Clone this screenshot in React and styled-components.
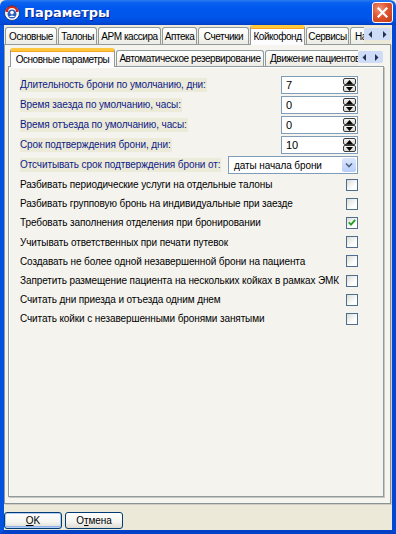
import React from "react";
import styled, { createGlobalStyle, css } from "styled-components";

const GlobalStyle = createGlobalStyle`
  html, body {
    margin: 0;
    padding: 0;
    background: #ECE9D8;
  }
  * {
    box-sizing: border-box;
  }
`;

const UI_FONT = `"Liberation Sans", Arial, sans-serif`;

const Window = styled.div`
  width: 396px;
  height: 534px;
  display: flex;
  flex-direction: column;
  font-family: ${UI_FONT};
  font-size: 10px;
  letter-spacing: -0.1px;
  color: #000;
`;

const TitleBar = styled.div`
  height: 25px;
  flex: none;
  display: flex;
  align-items: center;
  padding: 0 3px 0 4px;
  border-radius: 6px 6px 0 0;
  background: linear-gradient(
    to bottom,
    #2a7cf0 0%,
    #0b62ef 10%,
    #0058ee 30%,
    #0055e9 70%,
    #0049d8 92%,
    #003dc0 100%
  );
`;

const TitleText = styled.span`
  flex: 1;
  margin-left: 4px;
  font-family: "DejaVu Sans", sans-serif;
  font-weight: bold;
  font-size: 13px;
  letter-spacing: 0;
  color: #fff;
  text-shadow: 1px 1px 0 #0a1e8c;
`;

const CloseButton = styled.div`
  width: 21px;
  height: 21px;
  border: 1px solid #fff;
  border-radius: 3px;
  background: radial-gradient(circle at 35% 30%, #f0947a 0%, #e0532f 45%, #c23a15 100%);
  display: flex;
  align-items: center;
  justify-content: center;
`;

const Frame = styled.div`
  flex: 1;
  display: flex;
  flex-direction: column;
  border: 4px solid #0055e5;
  border-top: none;
  border-left-color: #0452e0;
  border-right-color: #0348d4;
  border-bottom-color: #0041c8;
  background: #ECE9D8;
  min-height: 0;
`;

const TabStrip = styled.div`
  position: relative;
  z-index: 1;
  flex: none;
  display: flex;
  align-items: flex-start;
  height: ${(p) => p.$h}px;
`;

const TabList = styled.div`
  flex: 1;
  min-width: 0;
  height: ${(p) => p.$h + 1}px;
  display: flex;
  align-items: flex-end;
  gap: 1px;
  padding-left: ${(p) => p.$pad}px;
  overflow: hidden;
`;

const Tab = styled.div`
  flex: none;
  width: ${(p) => p.$w}px;
  height: ${(p) => (p.$active ? p.$h + 1 : p.$h - 2)}px;
  margin-bottom: ${(p) => (p.$active ? 0 : 1)}px;
  padding: 0 1px;
  display: flex;
  align-items: center;
  justify-content: ${(p) => (p.$clip ? "flex-start" : "center")};
  padding-left: ${(p) => (p.$clip ? 4 : 1)}px;
  white-space: nowrap;
  overflow: hidden;
  letter-spacing: -0.45px;
  border: 1px solid #919b9c;
  border-bottom: none;
  border-radius: 3px 3px 0 0;
  background: linear-gradient(to bottom, #fff 0%, #f7f7f4 50%, #ecebe5 100%);
  ${(p) =>
    p.$active &&
    css`
      background: #fcfcfe;
      border-top: 3px solid #ffc83c;
      box-shadow: inset 0 1px 0 #f6a623;
    `}
`;

const ScrollArrows = styled.div`
  flex: none;
  width: ${(p) => p.$w}px;
  height: 12px;
  margin: ${(p) => p.$top}px 1px 0 0;
  display: flex;
  align-items: center;
  justify-content: space-around;
  background: #cfdcf8;
  border-radius: 2px;
`;

const Panel = styled.div`
  flex: 1;
  display: flex;
  flex-direction: column;
  margin-right: 1px;
  padding: 3px 6px 6px 3px;
  border: 1px solid #919b9c;
  border-right-color: #8a9394;
  border-bottom-color: #8a9394;
  box-shadow: 1px 1px 0 #d0cfc7;
  background: #f5f4ef;
  min-height: 0;
`;

const InnerPanel = styled.div`
  flex: 1;
  padding: 8px 25px 0 11px;
  border: 1px solid #919b9c;
  box-shadow: 1px 1px 0 #c8c7bf, inset 1px 1px 0 #fff;
  background: #f4f3ee;
`;

const FieldRow = styled.div`
  height: 20px;
  display: flex;
  align-items: center;
  justify-content: space-between;
`;

const FieldLabel = styled.span`
  line-height: 14px;
  white-space: nowrap;
  padding: 0 1px 0 0;
  background: #ecead9;
  color: #0c1a88;
`;

const SpinBox = styled.div`
  width: 77px;
  height: 18px;
  display: flex;
  align-items: center;
  border: 1px solid #7f9db9;
  background: #fff;
  padding: 0 1px 0 4px;
`;

const SpinValue = styled.span`
  flex: 1;
  font-size: 11px;
`;

const SpinButtons = styled.div`
  width: 13px;
  height: 14px;
  display: flex;
  flex-direction: column;
`;

const SpinButton = styled.div`
  flex: 1;
  display: flex;
  align-items: center;
  justify-content: center;
  border: 1px solid #3c3c3c;
  border-radius: 2px;
  background: linear-gradient(to bottom, #f4f4f2, #d8d8d0);
`;

const Combo = styled.div`
  width: 130px;
  height: 18px;
  display: flex;
  align-items: center;
  border: 1px solid #7f9db9;
  background: #fff;
  padding: 0 1px 0 5px;
`;

const ComboText = styled.span`
  flex: 1;
  white-space: nowrap;
`;

const ComboButton = styled.div`
  width: 14px;
  height: 14px;
  display: flex;
  align-items: center;
  justify-content: center;
  border-radius: 2px;
  background: linear-gradient(to bottom, #dde7fd, #b9cdf8);
`;

const CheckRow = styled.div`
  height: 19.2px;
  display: flex;
  align-items: center;
  justify-content: space-between;
  white-space: nowrap;
`;

const CheckBox = styled.div`
  width: 12px;
  height: 12px;
  flex: none;
  border: 1px solid #4f6d8f;
  background: linear-gradient(135deg, #dcdcd6 0%, #fff 70%);
  display: flex;
  align-items: center;
  justify-content: center;
`;

const ButtonBar = styled.div`
  height: 26px;
  flex: none;
  display: flex;
  gap: 3px;
  padding-top: 8px;
`;

const Button = styled.div`
  width: 58px;
  height: 17px;
  display: flex;
  align-items: center;
  justify-content: center;
  border: 1px solid #003c74;
  border-radius: 3px;
  background: linear-gradient(to bottom, #fff 0%, #f4f4f0 60%, #dcdad2 100%);
  ${(p) =>
    p.$default &&
    css`
      box-shadow: inset 0 0 0 1px #b2cbf5, inset 0 -1px 0 1px #8fb1ea;
    `}
`;

const Underline = styled.span`
  text-decoration: underline;
`;

const AppIcon = () => (
  <svg width="16" height="16" viewBox="0 0 16 16">
    <circle cx="8" cy="8" r="7.5" fill="#fff" />
    <path d="M1.5 7 A6.5 6.5 0 0 1 14.5 7 L12 7 A4 4 0 0 0 4 7 Z" fill="#d4261c" />
    <circle cx="8" cy="9" r="4.5" fill="#2d5fb8" />
    <circle cx="8" cy="7.6" r="1.8" fill="#fff" />
    <path d="M4.6 12 Q8 8.8 11.4 12 Z" fill="#fff" />
    <circle cx="8" cy="8" r="7.5" fill="none" stroke="#1b3f8a" strokeWidth="1" />
  </svg>
);

const CloseIcon = () => (
  <svg width="11" height="11" viewBox="0 0 11 11">
    <path d="M1.5 1.5 L9.5 9.5 M9.5 1.5 L1.5 9.5" stroke="#fff" strokeWidth="2.2" strokeLinecap="square" />
  </svg>
);

const Arrows = () => (
  <>
    <svg width="5" height="7" viewBox="0 0 5 7">
      <path d="M4 0 L4 7 L0.5 3.5 Z" fill="#23304f" />
    </svg>
    <svg width="5" height="7" viewBox="0 0 5 7">
      <path d="M1 0 L1 7 L4.5 3.5 Z" fill="#23304f" />
    </svg>
  </>
);

const UpArrow = () => (
  <svg width="7" height="4" viewBox="0 0 7 4">
    <path d="M0 4 L7 4 L3.5 0 Z" fill="#000" />
  </svg>
);

const DownArrow = () => (
  <svg width="7" height="4" viewBox="0 0 7 4">
    <path d="M0 0 L7 0 L3.5 4 Z" fill="#000" />
  </svg>
);

const Chevron = () => (
  <svg width="8" height="6" viewBox="0 0 8 6">
    <path d="M1 1.5 L4 4.5 L7 1.5" fill="none" stroke="#4d6185" strokeWidth="1.6" />
  </svg>
);

const Tick = () => (
  <svg width="8" height="7" viewBox="0 0 8 7">
    <path d="M0.8 3.4 L3 5.6 L7.2 0.9" fill="none" stroke="#21a121" strokeWidth="1.8" />
  </svg>
);

// last tab of each strip is partly hidden under the scroll arrows
const outerTabs = [
  { label: "Основные", w: 52 },
  { label: "Талоны", w: 39 },
  { label: "АРМ кассира", w: 63 },
  { label: "Аптека", w: 35 },
  { label: "Счетчики", w: 51 },
  { label: "Койкофонд", w: 55, active: true },
  { label: "Сервисы", w: 43 },
  { label: "Настройки", w: 60, clip: true },
];

const innerTabs = [
  { label: "Основные параметры", w: 105, active: true },
  { label: "Автоматическое резервирование", w: 148 },
  { label: "Движение пациентов", w: 110, clip: true },
];

const spinFields = [
  { label: "Длительность брони по умолчанию, дни:", value: "7" },
  { label: "Время заезда по умолчанию, часы:", value: "0" },
  { label: "Время отъезда по умолчанию, часы:", value: "0" },
  { label: "Срок подтверждения брони, дни:", value: "10" },
];

const checks = [
  { label: "Разбивать периодические услуги на отдельные талоны" },
  { label: "Разбивать групповую бронь на индивидуальные при заезде" },
  { label: "Требовать заполнения отделения при бронировании", checked: true },
  { label: "Учитывать ответственных при печати путевок" },
  { label: "Создавать не более одной незавершенной брони на пациента" },
  { label: "Запретить размещение пациента на нескольких койках в рамках ЭМК" },
  { label: "Считать дни приезда и отъезда одним днем" },
  { label: "Считать койки с незавершенными бронями занятыми" },
];

function Tabs({ items, h, pad, arrowsWidth, arrowsTop }) {
  return (
    <TabStrip $h={h}>
      <TabList $h={h} $pad={pad}>
        {items.map((t) => (
          <Tab key={t.label} $w={t.w} $h={h} $active={t.active} $clip={t.clip}>
            {t.label}
          </Tab>
        ))}
      </TabList>
      <ScrollArrows $w={arrowsWidth} $top={arrowsTop}>
        <Arrows />
      </ScrollArrows>
    </TabStrip>
  );
}

function App() {
  return (
    <Window>
      <GlobalStyle />
      <TitleBar>
        <AppIcon />
        <TitleText>Параметры</TitleText>
        <CloseButton>
          <CloseIcon />
        </CloseButton>
      </TitleBar>
      <Frame>
        <Tabs items={outerTabs} h={19} pad={1} arrowsWidth={27} arrowsTop={3} />
        <Panel>
          <Tabs items={innerTabs} h={18} pad={2} arrowsWidth={25} arrowsTop={3} />
          <InnerPanel>
            {spinFields.map((f) => (
              <FieldRow key={f.label}>
                <FieldLabel>{f.label}</FieldLabel>
                <SpinBox>
                  <SpinValue>{f.value}</SpinValue>
                  <SpinButtons>
                    <SpinButton>
                      <UpArrow />
                    </SpinButton>
                    <SpinButton>
                      <DownArrow />
                    </SpinButton>
                  </SpinButtons>
                </SpinBox>
              </FieldRow>
            ))}
            <FieldRow>
              <FieldLabel>Отсчитывать срок подтверждения брони от:</FieldLabel>
              <Combo>
                <ComboText>даты начала брони</ComboText>
                <ComboButton>
                  <Chevron />
                </ComboButton>
              </Combo>
            </FieldRow>
            {checks.map((c) => (
              <CheckRow key={c.label}>
                <span>{c.label}</span>
                <CheckBox>{c.checked && <Tick />}</CheckBox>
              </CheckRow>
            ))}
          </InnerPanel>
        </Panel>
        <ButtonBar>
          <Button $default>
            <Underline>O</Underline>K
          </Button>
          <Button>
            О<Underline>т</Underline>мена
          </Button>
        </ButtonBar>
      </Frame>
    </Window>
  );
}

export default App;
